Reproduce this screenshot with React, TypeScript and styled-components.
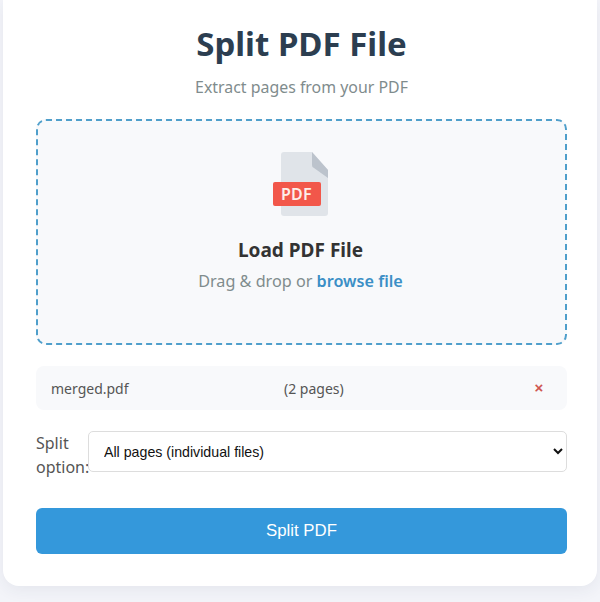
import * as React from "react"
import styled, { createGlobalStyle } from "styled-components"

const Global = createGlobalStyle`
  html, body {
    margin: 0;
    padding: 0;
    background: #f3f4f9;
    font-family: "Noto Sans", "Open Sans", sans-serif;
  }
`

const PdfIcon = () => (
  <svg width="58" height="64" viewBox="0 0 58 64">
    <path d="M11 3a3 3 0 0 1 3-3h28l16 18v43a3 3 0 0 1-3 3H14a3 3 0 0 1-3-3z" fill="#e0e4e9" />
    <path d="M42 0l16 18v8L44 16a3 3 0 0 1-2-3z" fill="#bcc3cc" />
    <rect x="3" y="30" width="48" height="24" rx="2" fill="#f2574a" />
  </svg>
)

export default () => (
  <Page>
    <Global />
    <Card>
      <Title>Split PDF File</Title>
      <Subtitle>Extract pages from your PDF</Subtitle>
      <DropZone>
        <IconWrap>
          <PdfIcon />
          <IconLabel>PDF</IconLabel>
        </IconWrap>
        <DropTitle>Load PDF File</DropTitle>
        <DropHint>
          Drag &amp; drop or <Browse>browse file</Browse>
        </DropHint>
      </DropZone>
      <FileRow>
        <FileName>merged.pdf</FileName>
        <span>(2 pages)</span>
        <Remove>×</Remove>
      </FileRow>
      <OptionRow>
        <OptionLabel>Split option:</OptionLabel>
        <Select defaultValue="all">
          <option value="all">All pages (individual files)</option>
          <option value="range">Page range</option>
        </Select>
      </OptionRow>
      <SplitButton>Split PDF</SplitButton>
    </Card>
  </Page>
)

const Page = styled.div`
  width: 600px;
  height: 602px;
  padding: 0 3px;
  box-sizing: border-box;
  overflow: hidden;
`

const Card = styled.div`
  height: 586px;
  box-sizing: border-box;
  padding: 0 30px 0 33px;
  background: #fff;
  border-radius: 0 0 16px 16px;
  box-shadow: 0 4px 16px rgba(40, 50, 90, 0.07);
  display: flex;
  flex-direction: column;
`

const Title = styled.h1`
  margin: 21px 0 0;
  font-size: 33px;
  line-height: 46px;
  font-weight: 700;
  color: #2c3e50;
  text-align: center;
`

const Subtitle = styled.p`
  margin: 9px 0 0;
  font-size: 15.9px;
  line-height: 22px;
  color: #7f8c8d;
  text-align: center;
`

const DropZone = styled.div`
  margin-top: 21px;
  height: 226px;
  box-sizing: border-box;
  border: 2px dashed #4f9fcb;
  border-radius: 10px;
  background: #f8f9fb;
  display: flex;
  flex-direction: column;
  align-items: center;
  padding: 31px 2px 0 0;
`

const IconWrap = styled.div`
  position: relative;
  width: 58px;
  height: 64px;
  transform: translateX(-2px);
`

const IconLabel = styled.span`
  position: absolute;
  left: 3px;
  top: 30px;
  width: 48px;
  height: 24px;
  font-size: 16px;
  line-height: 24px;
  font-weight: 600;
  letter-spacing: 0.3px;
  color: #fdeeea;
  text-align: center;
`

const DropTitle = styled.div`
  margin-top: 21px;
  font-size: 19px;
  line-height: 26px;
  font-weight: 700;
  color: #333;
`

const DropHint = styled.div`
  margin-top: 7px;
  font-size: 16.2px;
  line-height: 22px;
  color: #7f8c8d;
`

const Browse = styled.span`
  color: #3b8fc6;
  font-weight: 600;
`

const FileRow = styled.div`
  margin-top: 21px;
  height: 44px;
  padding: 0 16px 0 15px;
  border-radius: 8px;
  background: #f8f9fb;
  display: flex;
  align-items: center;
  font-size: 14px;
  color: #555;
`

const FileName = styled.span`
  width: 233px;
`

const Remove = styled.button`
  width: 24px;
  margin-left: auto;
  padding: 0;
  border: none;
  background: none;
  font-size: 15px;
  font-weight: 700;
  line-height: 16px;
  color: #cf5652;
  cursor: pointer;
`

const OptionRow = styled.div`
  margin-top: 21px;
  display: flex;
  align-items: flex-start;
`

const OptionLabel = styled.label`
  width: 52px;
  flex-shrink: 0;
  font-size: 16px;
  line-height: 24px;
  color: #555;
`

const Select = styled.select`
  flex: 1;
  min-width: 0;
  height: 41px;
  padding: 0 11px;
  background: #fff;
  border: 1px solid #ddd;
  border-radius: 5px;
  font-family: "Liberation Sans", Arial, sans-serif;
  font-size: 14.2px;
  color: #111;
`

const SplitButton = styled.button`
  margin-top: 29px;
  height: 46px;
  border: none;
  border-radius: 6px;
  background: #3498db;
  color: #fff;
  font-family: "Liberation Sans", Arial, sans-serif;
  font-size: 16.8px;
  cursor: pointer;
`
